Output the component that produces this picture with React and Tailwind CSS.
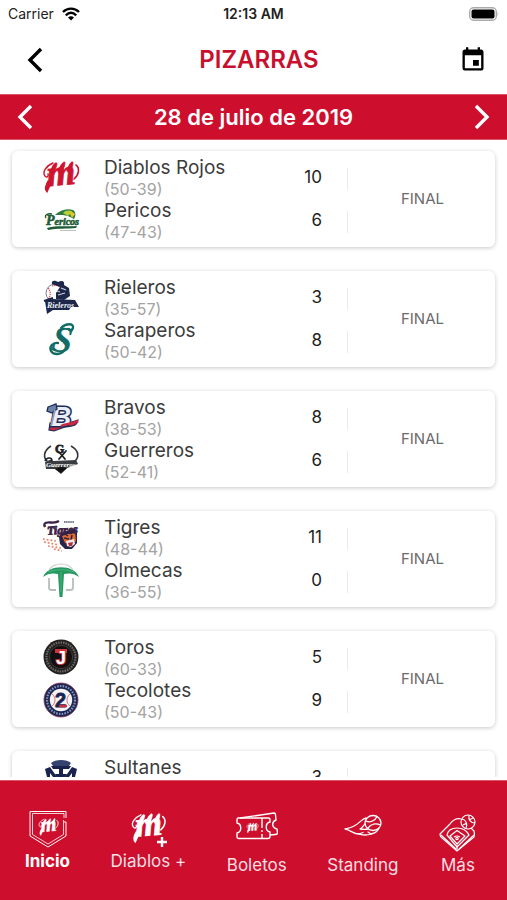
import React, { useState } from "react";
import { MdEvent } from "react-icons/md";

// Script "m" of the club, takes the current text colour
const ScriptM = () => (
  <g fill="currentColor" stroke="currentColor" strokeLinecap="round">
    <text
      x="4"
      y="26"
      fontFamily="Liberation Serif, serif"
      fontWeight="bold"
      fontStyle="italic"
      fontSize="37"
      strokeWidth="0.8"
      transform="rotate(-5 18 20)"
    >
      m
    </text>
    <path d="M10 4 C3 7 -1 13 2 17 C3 19 6 18 5 15" fill="none" strokeWidth="1.4" />
    <path d="M9 22 L4 33 C2 31 2 27 5 22 Z" strokeWidth="1.2" />
    <path d="M8 12 C9 5 14 2 14 5 C14 7 12 10 11 14 Z" strokeWidth="0.8" />
    <path d="M15 13 C17 5 22 1 22 4 C22 7 20 10 19 14 Z" strokeWidth="0.8" />
    <path d="M24 12 C26 4 30 1 30 4 C30 7 28 10 28 14 Z" strokeWidth="0.8" />
    <path d="M33 6 C37 9 36 16 31 20" fill="none" strokeWidth="1.6" />
  </g>
);

const DiablosLogo = () => (
  <svg viewBox="0 0 36 36" className="size-9 overflow-visible text-[#cf1430]" aria-hidden="true">
    <ScriptM />
  </svg>
);

const PericosLogo = () => (
  <svg viewBox="0 0 36 36" className="size-9 overflow-visible" aria-hidden="true">
    <path d="M12 13 C17 8 24 6 30 8 C33 10 33 14 31 17 L25 14 L20 13 Z" fill="#2c7a3c" />
    <path d="M20 11 C23 8 27 8 29 10 L25 14 Z" fill="#b8cf3a" />
    <path d="M28 9 L32 12 L29 16 L27 12 Z" fill="#e8c52f" />
    <text x="3" y="23" fontFamily="Liberation Serif, serif" fontWeight="bold" fontStyle="italic" fontSize="10" fill="#1d5c36" stroke="#1d5c36" strokeWidth="0.6">
      <tspan fontSize="14">P</tspan>ericos
    </text>
    <path d="M3 16 C1 13 5 11 9 12" fill="none" stroke="#1d5c36" strokeWidth="1.4" />
    <path d="M4 26 C14 23 24 25 34 24 L33 26 C24 27 14 26 5 28 Z" fill="#1d5c36" />
    <path d="M17 28.5 H33" stroke="#a8b9a8" strokeWidth="0.8" />
  </svg>
);

const RielerosLogo = () => (
  <svg viewBox="0 0 36 36" className="size-9 overflow-visible" aria-hidden="true">
    <circle cx="12" cy="14" r="9" fill="#fff" stroke="#7c8296" strokeWidth="1" />
    <path d="M5 9 C8 12 8 17 5 20 M9 7 C14 5 19 8 20 13" fill="none" stroke="#dd4d55" strokeWidth="1.2" strokeDasharray="1.4 0.7" />
    <path d="M9 5 C8 1 12 1 15 3 C19 1 22 2 21 6 L26 9 L27 17 L21 21 L13 20 L13 14 L17 8 Z" fill="#1c2749" />
    <path d="M18 9 L23 11 M15 16 L22 14 M14 12 L17 13" stroke="#c7cedd" strokeWidth="1.3" />
    <path d="M2 22 L9 20 L32 21 L36 28 L28 28 L26 31 L10 31 L4 35 Z" fill="#1c2749" />
    <text x="4" y="29" fontFamily="Liberation Serif, serif" fontWeight="bold" fontStyle="italic" fontSize="8" fill="#eef1f7">
      Rieleros
    </text>
    <path d="M1 22 L10 19" fill="none" stroke="#1c2749" strokeWidth="2" />
  </svg>
);

const SaraperosLogo = () => (
  <svg viewBox="0 0 36 36" className="size-9 overflow-visible" aria-hidden="true">
    <text
      x="9"
      y="30"
      fontFamily="Liberation Serif, serif"
      fontWeight="bold"
      fontStyle="italic"
      fontSize="37"
      fill="#146c66"
      transform="rotate(8 19 18)"
    >
      S
    </text>
    <path d="M18 6 C23 1 31 1 30 6 C29 9 26 9 26 7" fill="none" stroke="#146c66" strokeWidth="2.4" strokeLinecap="round" />
    <path d="M15 21 C10 20 6 25 8 29 C10 33 17 33 21 29" fill="none" stroke="#146c66" strokeWidth="2.4" strokeLinecap="round" />
    <path d="M16 28 C19 26 20 23 19 20" fill="none" stroke="#d7e8e5" strokeWidth="1" strokeDasharray="1.5 1" />
  </svg>
);

const BravosLogo = () => (
  <svg viewBox="0 0 36 36" className="size-9 overflow-visible" aria-hidden="true">
    <path d="M7 24 L16 27 L35 21 C34 28 27 27 22 28 L11 32 L6 31 Z" fill="#c92a43" stroke="#1c2c58" strokeWidth="1.2" />
    <text
      x="8"
      y="27"
      fontFamily="Liberation Sans, sans-serif"
      fontWeight="bold"
      fontStyle="italic"
      fontSize="28"
      fill="#e9edf5"
      stroke="#1c2c58"
      strokeWidth="3.2"
      paintOrder="stroke"
    >
      B
    </text>
    <path d="M5 8 L13 5 L14 10 L9 14 L4 12 Z" fill="#6e82a8" stroke="#1c2c58" strokeWidth="1.3" />
    <path d="M12 11 L8 27" stroke="#8ba0c4" strokeWidth="1.8" />
    <path d="M18 27 C23 24 28 26 35 22" fill="none" stroke="#c92a43" strokeWidth="2.6" />
  </svg>
);

const GuerrerosLogo = () => (
  <svg viewBox="0 0 36 36" className="size-9 overflow-visible" aria-hidden="true">
    <path d="M8 4 C0 9 0 16 5 20 M28 4 C37 9 36 16 31 20" fill="none" stroke="#33363a" strokeWidth="1.6" />
    <text x="12" y="11" fontFamily="Liberation Serif, serif" fontWeight="bold" fontSize="12" fill="#1e2022" stroke="#1e2022" strokeWidth="0.8">
      G
    </text>
    <path d="M16 10 L22 17 M23 9 L16 17" stroke="#1e2022" strokeWidth="1.8" strokeLinecap="round" />
    <path d="M2 20 L9 17 L10 19 L33 18 L35 22 L24 26 L18 32 L12 27 L3 27 Z" fill="#3a3d41" />
    <path d="M12 27 L18 31 L24 26 L18 25 Z" fill="#111" />
    <text x="3" y="25" fontFamily="Liberation Serif, serif" fontWeight="bold" fontStyle="italic" fontSize="7" fill="#fff">
      Guerreros
    </text>
    <path d="M2 19 C4 14 11 16 8 19" fill="none" stroke="#1e2022" strokeWidth="1.6" />
  </svg>
);

const TigresLogo = () => (
  <svg viewBox="0 0 36 36" className="size-9 overflow-visible" aria-hidden="true">
    <path d="M16 18 L20 13 L31 10 L34 14 L34 24 L29 30 L22 30 L17 25 Z" fill="#2b2347" />
    <path d="M19 17 L25 15 L32 13 L33 22 L29 25 L22 24 Z" fill="#e06a33" />
    <path d="M21 19 L26 20 M29 16 L28 21 M22 15 L25 17" stroke="#2b2347" strokeWidth="1.5" />
    <path d="M23 22 L31 20 L32 25 L28 28 L24 27 Z" fill="#eee9e6" />
    <path d="M25 24 L30 23 L29 27 L26 27 Z" fill="#b02d42" />
    <text
      x="4"
      y="15"
      fontFamily="Liberation Serif, serif"
      fontWeight="bold"
      fontStyle="italic"
      fontSize="12"
      fill="#3a2145"
      stroke="#3a2145"
      strokeWidth="0.8"
      transform="rotate(-3 18 12)"
    >
      Tigres
    </text>
    <path d="M1 5 C5 1 10 6 16 2 M1 5 L2 8" fill="none" stroke="#3a2145" strokeWidth="2.4" />
    <path d="M21 3 H31" stroke="#7b7790" strokeWidth="2" strokeDasharray="1.5 0.6" />
    <path d="M0 20 L13 22 M1 23 L16 26 M5 27 L18 29 M11 30 L19 32" stroke="#ed8068" strokeWidth="1.7" strokeDasharray="1.8 2" />
  </svg>
);

const OlmecasLogo = () => (
  <svg viewBox="0 0 36 36" className="size-9" aria-hidden="true">
    <path d="M6 8 C11 0 25 0 30 8" fill="none" stroke="#c9cdca" strokeWidth="1.2" />
    <path d="M6 16 V26 Q6 28 9 28 H13 M30 16 V26 Q30 28 27 28 H23" fill="none" stroke="#b9bebb" strokeWidth="1.8" />
    <path d="M0 15 C5 2 31 2 36 15 C31 11 26 11 21 12 L19.5 35 H16.5 L15 12 C10 11 5 11 0 15 Z" fill="#259a60" />
    <path d="M5 10 C12 7 24 7 31 10 M18 10 V30" fill="none" stroke="#56b886" strokeWidth="0.8" />
  </svg>
);

const TorosLogo = () => (
  <svg viewBox="0 0 36 36" className="size-9" aria-hidden="true">
    <circle cx="18" cy="18" r="17.5" fill="#222020" />
    <circle cx="18" cy="18" r="14.5" fill="none" stroke="#6f6a67" strokeWidth="2.2" strokeDasharray="1.5 1" />
    <circle cx="18" cy="18" r="11.6" fill="#121010" stroke="#5b5654" strokeWidth="0.6" />
    <path d="M12 10 H24 V14 H12 Z" fill="#d3343c" />
    <text x="13" y="25" fontFamily="Liberation Sans, sans-serif" fontWeight="bold" fontSize="18" fill="#fff" stroke="#d3343c" strokeWidth="2" paintOrder="stroke">
      J
    </text>
  </svg>
);

const TecolotesLogo = () => (
  <svg viewBox="0 0 36 36" className="size-9" aria-hidden="true">
    <circle cx="18" cy="18" r="17" fill="#182653" stroke="#8c3550" strokeWidth="0.8" />
    <circle cx="18" cy="18" r="14" fill="none" stroke="#8790b3" strokeWidth="2.2" strokeDasharray="1.6 1.2" />
    <circle cx="18" cy="18" r="11.2" fill="#f6f3f2" />
    <path d="M9 12 C13 15 13 21 9 24 M27 12 C23 15 23 21 27 24" fill="none" stroke="#d66b74" strokeWidth="0.9" />
    <text x="12" y="25" fontFamily="Liberation Sans, sans-serif" fontWeight="bold" fontSize="20" fill="#182653" stroke="#182653" strokeWidth="0.8">
      2
    </text>
    <path d="M16 24 H24" stroke="#cf2e3f" strokeWidth="2.4" />
  </svg>
);

const SultanesLogo = () => (
  <svg viewBox="0 0 36 36" className="size-9" aria-hidden="true">
    <path d="M8 4 C12 0 24 0 28 4 L26 7 H10 Z" fill="#34446f" />
    <path d="M2 10 L7 8 L14 18 H10 L7 14 L7 20 L4 18 Z M34 10 L29 8 L22 18 H26 L29 14 L29 20 L32 18 Z" fill="#18244f" />
    <path d="M8 7 H28 L26 10 H20 V15 H24 L22 19 H14 L12 15 H16 V10 H10 Z" fill="#18244f" />
  </svg>
);

const games = [
  {
    status: "FINAL",
    teams: [
      { name: "Diablos Rojos", record: "50-39", runs: 10, Logo: DiablosLogo },
      { name: "Pericos", record: "47-43", runs: 6, Logo: PericosLogo },
    ],
  },
  {
    status: "FINAL",
    teams: [
      { name: "Rieleros", record: "35-57", runs: 3, Logo: RielerosLogo },
      { name: "Saraperos", record: "50-42", runs: 8, Logo: SaraperosLogo },
    ],
  },
  {
    status: "FINAL",
    teams: [
      { name: "Bravos", record: "38-53", runs: 8, Logo: BravosLogo },
      { name: "Guerreros", record: "52-41", runs: 6, Logo: GuerrerosLogo },
    ],
  },
  {
    status: "FINAL",
    teams: [
      { name: "Tigres", record: "48-44", runs: 11, Logo: TigresLogo },
      { name: "Olmecas", record: "36-55", runs: 0, Logo: OlmecasLogo },
    ],
  },
  {
    status: "FINAL",
    teams: [
      { name: "Toros", record: "60-33", runs: 5, Logo: TorosLogo },
      { name: "Tecolotes", record: "50-43", runs: 9, Logo: TecolotesLogo },
    ],
  },
  {
    status: "",
    teams: [{ name: "Sultanes", record: "", runs: 3, Logo: SultanesLogo }],
  },
];

const HomePlateIcon = () => (
  <svg viewBox="0 0 38 38" className="size-[38px]" fill="none" stroke="currentColor" aria-hidden="true">
    <path d="M37 8 V1.5 H1 V26 L19 37 L37 26 V12 H35" strokeWidth="1" />
    <path d="M35 8 V3.5 H3.5 V24.500 L19 34 L34.500 24.500 V10" strokeWidth="0.8" />
    <svg x="9" y="7" width="21" height="20" viewBox="0 0 36 36" overflow="visible">
      <ScriptM />
    </svg>
  </svg>
);

const DiablosPlusIcon = () => (
  <svg viewBox="0 0 38 38" className="size-[38px] overflow-visible" aria-hidden="true">
    <svg x="2" y="1" width="35" height="34" viewBox="0 0 36 36" overflow="visible">
      <ScriptM />
    </svg>
    <path d="M33 27 V37 M28 32 H38" stroke="#cd0e2d" strokeWidth="6" />
    <path d="M33 27 V37 M28 32 H38" stroke="currentColor" strokeWidth="2.4" />
  </svg>
);

const TicketsIcon = () => (
  <svg viewBox="0 0 42 38" className="h-[38px] w-[42px]" fill="none" stroke="currentColor" strokeWidth="1.4" strokeLinejoin="round" aria-hidden="true">
    <path d="M2 8 H32.500 Q34 8 34 10 V12 C29 13 29 21 34 22 V26 Q34 28.500 32 28.500 H3 Q1 28.500 1 26.500 V23 C6 22 6 14 1 13 V10 Q1 8 2 8 Z" />
    <path d="M4 8 L38 3 Q39.500 3 39.500 5 L40 10 C35 12 36 18 41 19 L41.500 23 Q41.500 24.500 39 24.500 L34 25" />
    <path d="M26 8 V28" strokeDasharray="10 2 2 2" />
    <svg x="10" y="12" width="13" height="12" viewBox="0 0 36 36" overflow="visible">
      <ScriptM />
    </svg>
  </svg>
);

const FlyingBallIcon = () => (
  <svg viewBox="0 0 38 38" className="size-[38px]" fill="none" stroke="currentColor" strokeWidth="1.3" strokeLinejoin="round" strokeLinecap="round" aria-hidden="true">
    <ellipse cx="29" cy="13" rx="8" ry="7.500" />
    <path d="M22 11 C26 13 31 11 33 6.500 M24 18 C27 14 32 13 36.500 15" />
    <path d="M22 8 C16 9 15 17 1 19 C7 20 9 24 15 24 C19 25 21 26 27 24 C31 23 34 21 35 18" />
    <path d="M21 14 C19 16 18 18 16 19 C19 19 20 20 24 19 M15 24 L19 22.500 M27 24 L24 22" />
  </svg>
);

const FieldIcon = () => (
  <svg viewBox="0 0 38 42" className="h-[42px] w-[38px]" fill="none" stroke="currentColor" strokeWidth="1.2" strokeLinejoin="round" aria-hidden="true">
    <path d="M22 9 C18 8 14 10 11 14 L1 24 Q1 26 2 27 L18 41 L35 27 Q36 24 35 21 L32 18" />
    <path d="M8 25 C9 20 13 18 18 18 C24 18 28 21 30 25 L18 37 Z" />
    <path d="M11 26 L18 20.500 L26 26 L18 34 Z M15 27 Q18 25 21 27 M18 35 V40 M2 25 L17 39 M35 25 L20 39" />
    <circle cx="29" cy="12" r="7" />
    <path d="M23 9 C27 10 29 14 27 18.500 M30 5 C29 10 32 13 36 13 M24 15 L28 13 M30 10 L34 8" />
    <circle cx="18" cy="28.500" r="1.200" />
  </svg>
);

const tabs = [
  { label: "Inicio", Icon: HomePlateIcon },
  { label: "Diablos +", Icon: DiablosPlusIcon },
  { label: "Boletos", Icon: TicketsIcon, low: true },
  { label: "Standing", Icon: FlyingBallIcon, low: true },
  { label: "Más", Icon: FieldIcon, low: true },
];

const StatusBar = () => (
  <div className="grid h-7 shrink-0 grid-cols-3 items-center px-2 text-sm text-[#222]">
    <div className="flex items-center gap-2">
      <span>Carrier</span>
      <svg viewBox="0 0 18 14" className="h-3.5 w-[18px]" fill="none" stroke="#000" strokeWidth="2.4" aria-hidden="true">
        <path d="M1 5 C5.500 0.500 12.500 0.500 17 5" />
        <path d="M3.800 8.300 C7 5.300 11 5.300 14.200 8.300" />
        <path d="M9 13.500 L6 10.500 Q9 8.200 12 10.500 Z" fill="#000" stroke="none" />
      </svg>
    </div>
    <span className="text-center font-semibold">12:13 AM</span>
    <svg viewBox="0 0 30 14" className="h-3.5 w-[30px] justify-self-end" aria-hidden="true">
      <rect x="0.700" y="0.700" width="26.600" height="12.600" rx="4" fill="#fff" stroke="#aaa" strokeWidth="1.400" />
      <rect x="2.500" y="2.500" width="23" height="9" rx="2" fill="#000" />
      <path d="M28.500 5 Q30 7 28.500 9 Z" fill="#aaa" />
    </svg>
  </div>
);

const Chevron = ({ right }) => (
  <svg viewBox="0 0 16 26" className="h-[26px] w-4" fill="none" stroke="currentColor" strokeWidth="3.400" aria-hidden="true">
    <path d={right ? "M2 2 L13 13 L2 24" : "M14 2 L3 13 L14 24"} />
  </svg>
);

const TeamRow = ({ name, record, runs, Logo }) => (
  <li className="flex h-[43px] items-center">
    <div className="pb-[3px]">
      <Logo />
    </div>
    <div className="ml-[25px] flex-1">
      <p className="text-[19px] leading-[22px] text-[#3c3c3c]">{name}</p>
      <p className="h-[21px] text-base leading-[21px] text-[#a3a3a3]">{record && `(${record})`}</p>
    </div>
    <span className="pr-[25px] pb-0.5 text-[17px] text-[#222]">{runs}</span>
    <span className="h-[22px] w-px bg-[#ebebeb]" />
  </li>
);

const GameCard = ({ game }) => (
  <article className="flex min-h-24 shrink-0 rounded-md bg-white pt-1.5 pb-1 pl-[31px] shadow-[0_1px_4px_rgba(0,0,0,0.22)]">
    <ul className="flex-1">
      {game.teams.map((team) => (
        <TeamRow key={team.name} {...team} />
      ))}
    </ul>
    <p className="flex w-[147px] items-center justify-center pb-0.5 pl-0.5 text-[15px] text-[#6b6b6b]">{game.status}</p>
  </article>
);

const App = () => {
  const [activeTab, setActiveTab] = useState("Inicio");

  return (
    <div className="flex h-screen flex-col bg-white font-[Inter,sans-serif]">
      <StatusBar />

      <header className="flex h-[66px] shrink-0 items-center justify-between pr-5 pb-0.5 pl-[27px]">
        <button aria-label="Regresar" className="w-8 text-black">
          <Chevron />
        </button>
        <h1 className="text-2xl font-semibold text-[#c8102e]">PIZARRAS</h1>
        <button aria-label="Calendario" className="text-black">
          <MdEvent size={28} />
        </button>
      </header>

      <div className="flex h-[46px] shrink-0 items-center justify-between border-y border-[#dc5468] bg-[#cd0e2d] px-[17px] text-white">
        <button aria-label="Día anterior">
          <Chevron />
        </button>
        <h2 className="text-[22px] font-semibold">28 de julio de 2019</h2>
        <button aria-label="Día siguiente">
          <Chevron right />
        </button>
      </div>

      <main className="mb-[3px] flex min-h-0 flex-1 flex-col gap-6 overflow-hidden px-3 pt-[11px]">
        {games.map((game) => (
          <GameCard key={game.teams[0].name} game={game} />
        ))}
      </main>

      <nav className="flex h-[120px] shrink-0 items-start justify-between border-t border-[#dc5468] bg-[#cd0e2d] pt-[29px] pr-[30px] pl-[25px] text-white">
        {tabs.map(({ label, Icon, low }) => (
          <button key={label} onClick={() => setActiveTab(label)} className={`flex flex-col items-center ${low ? "h-[66px]" : "h-[62px]"}`}>
            <Icon />
            <span className={`mt-auto text-[17px] leading-[22px] ${activeTab === label ? "font-bold" : "text-[#fbdfe3]"}`}>{label}</span>
          </button>
        ))}
      </nav>
    </div>
  );
};

export default App;
